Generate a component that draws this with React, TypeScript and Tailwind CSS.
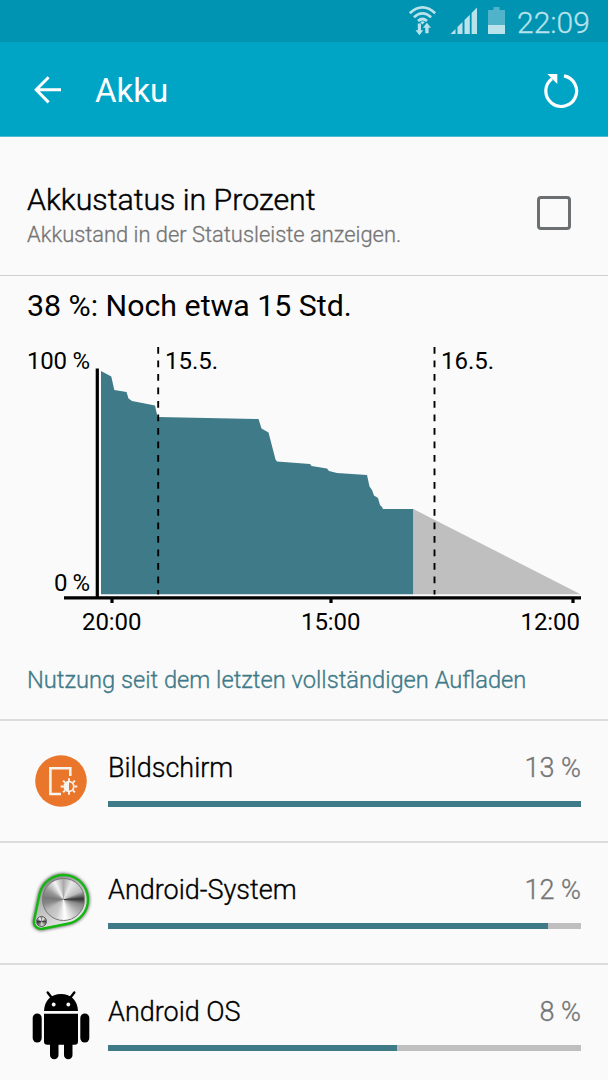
import type { ReactNode } from "react";

interface UsageItem {
  name: string;
  percent: number;
  fill: number;
  icon: ReactNode;
}

const WifiIcon = () => (
  <svg width="30" height="32" viewBox="0 0 30 32" fill="none" stroke="#b9e2eb" strokeWidth="2.7">
    <path d="M1.8 8.2 Q14.5 -3.4 27.2 8.2" />
    <path d="M5.9 12.2 Q14.5 4.4 23.1 12.2" />
    <path d="M10 16 Q14.5 12 19 16" />
    <path d="M12.3 17.3 L14.5 19.5 L16.7 17.3 Q14.5 15.4 12.3 17.3 Z" fill="#b9e2eb" stroke="none" />
    <path d="M9.8 18.5 H13 V25.2 H15.3 L11.4 30.3 L7.5 25.2 H9.8 Z" fill="#b9e2eb" stroke="none" />
    <path d="M17.3 28.2 H20.6 V22.8 H23 L18.9 17.7 L14.9 22.8 H17.3 Z" fill="#b9e2eb" stroke="none" />
  </svg>
);

const SignalIcon = () => (
  <svg width="28" height="28" viewBox="0 0 28 28" fill="#b9e2eb">
    <path d="M0.5 27 L5.5 22 V27 Z" />
    <path d="M7.5 20 L12.5 15 V27 H7.5 Z" />
    <path d="M14.5 13 L19.8 7.7 V27 H14.5 Z" />
    <path d="M21.6 5.9 L27 0.5 V27 H21.6 Z" />
  </svg>
);

const BatteryIcon = () => (
  <svg width="17" height="27" viewBox="0 0 17 27">
    <path d="M0 3 H5.5 V0 H11.5 V3 H17 V18 H0 Z" fill="#51b3c9" />
    <path d="M0 18 H17 V27 H0 Z" fill="#b9e2eb" />
  </svg>
);

const BackIcon = () => (
  <svg className="mb-[3px]" width="28" height="28" viewBox="0 0 28 28" fill="none" stroke="#fff" strokeWidth="3">
    <path d="M14.6 1.2 L2.2 13.8 L14.6 26.4 M2.4 13.8 H27" />
  </svg>
);

const RefreshIcon = () => (
  <svg width="36" height="36" viewBox="0 0 36 36">
    <path d="M21 2.9 A15.4 15.4 0 1 1 9 5.7" fill="none" stroke="#fff" strokeWidth="3.2" />
    <path d="M4.3 1 H14.3 V11 Z" fill="#fff" />
  </svg>
);

const ScreenIcon = () => (
  <svg width="68" height="72" viewBox="0 -1 68 72">
    <circle cx="34" cy="34" r="25.8" fill="#e9762b" />
    <path d="M43.3 29 V21.3 H23.4 V47 H34" fill="none" stroke="#f7f3ee" strokeWidth="2.6" />
    <g stroke="#f7f3ee" strokeWidth="1.9">
      <path d="M42 31.2 V34 M42 45 V47.8 M33.7 39.5 H36.5 M47.5 39.5 H50.3 M36.1 33.6 L38 35.5 M46 43.5 L47.9 45.4 M47.9 33.6 L46 35.5 M38 43.5 L36.1 45.4" />
      <circle cx="42" cy="39.5" r="4.8" fill="none" strokeWidth="1.7" />
    </g>
    <path d="M42 34.5 A5 5 0 0 0 42 44.5 Z" fill="#f7f3ee" />
  </svg>
);

const SystemIcon = () => (
  <svg width="68" height="72" viewBox="0 0 68 72">
    <defs>
      <linearGradient id="plate" x1="0" y1="0" x2="0.6" y2="1">
        <stop offset="0" stopColor="#6e6e6e" />
        <stop offset="0.5" stopColor="#bbb" />
        <stop offset="1" stopColor="#eee" />
      </linearGradient>
      <filter id="plateShadow" x="-20%" y="-20%" width="140%" height="140%">
        <feGaussianBlur stdDeviation="1.8" />
      </filter>
    </defs>
    <path d="M12.6 26 A24.5 24.5 0 1 1 40.5 55.7 L15.5 60.7 A7 7 0 0 1 7.1 52.5 Z" fill="#777" stroke="#777" strokeWidth="4" filter="url(#plateShadow)" />
    <path d="M12.6 26 A24.5 24.5 0 1 1 40.5 55.7 L15.5 60.7 A7 7 0 0 1 7.1 52.5 Z" fill="url(#plate)" stroke="#12b80f" strokeWidth="2.4" />
    <foreignObject x="15" y="10" width="46" height="46">
      <div className="h-[43px] w-[43px] rounded-full border border-[#777] bg-[conic-gradient(#aaa,#e8e8e8_25deg,#bbb_65deg,#333_88deg,#888_105deg,#c4c4c4_140deg,#fff_175deg,#ccc_205deg,#bbb_235deg,#888_258deg,#777_275deg,#999_300deg,#f4f4f4_333deg,#aaa)]" />
    </foreignObject>
    <foreignObject x="8.5" y="48" width="14" height="14">
      <div className="h-[11px] w-[11px] rounded-full border border-[#555] bg-[conic-gradient(#888,#eee_30deg,#444_90deg,#ddd_170deg,#777_220deg,#333_270deg,#fff_330deg,#888)]" />
    </foreignObject>
  </svg>
);

const AndroidIcon = () => (
  <svg width="68" height="72" viewBox="0 2.5 68 72">
    <path d="M17 23.6 C17.5 13 24 6.6 34 6.6 C44 6.6 50.5 13 51 23.6 Z" />
    <path d="M20.7 5 L24.5 10 M47.3 5 L43.5 10" stroke="#000" strokeWidth="2.4" strokeLinecap="round" />
    <circle cx="26.7" cy="17" r="1.9" fill="#fafafa" />
    <circle cx="41.3" cy="17" r="1.9" fill="#fafafa" />
    <path d="M17 26.3 H51 V54 Q51 57.3 47.7 57.3 H20.3 Q17 57.3 17 54 Z" />
    <rect x="5.7" y="26" width="9" height="29" rx="4.5" />
    <rect x="53.3" y="26" width="9" height="29" rx="4.5" />
    <path d="M23 55 H31.5 V67.5 A4.2 4.2 0 0 1 23 67.5 Z M37 55 H45.5 V67.5 A4.2 4.2 0 0 1 37 67.5 Z" />
  </svg>
);

const items: UsageItem[] = [
  { name: "Bildschirm", percent: 13, fill: 100, icon: <ScreenIcon /> },
  { name: "Android-System", percent: 12, fill: 93.1, icon: <SystemIcon /> },
  { name: "Android OS", percent: 8, fill: 61.1, icon: <AndroidIcon /> },
];

const BatteryChart = () => (
  <svg className="block" width="608" height="300" viewBox="0 340 608 300" fontFamily="Roboto, sans-serif" fontSize="24">
    <path d="M101 594.3 V371 L111.3 376.5 L114.3 390 L126.5 392 L128.5 398.5 L132 401 L155 405.5 L157.5 417 L258.5 419 L261.5 428.5 L268.5 432.5 L275.5 459.5 L277 461.5 L310 464 L311.5 466 L327 468.5 L329 471 L337 473 L367 475 L369.5 486.5 L372 490 L374 495.5 L378 498 L380 505 L382 507 L383 509 H413.5 V594.3 Z" fill="#3f7a89" />
    <path d="M413.3 509 L580.5 594.3 H413.3 Z" fill="#bfbfbf" />
    <path d="M158.2 347 V594.5 M434.5 347 V594.5" fill="none" stroke="#000" strokeWidth="1.9" strokeDasharray="6.75 6.75" />
    <path d="M97.3 368.5 V597.8 M64 597.9 H581" fill="none" stroke="#000" strokeWidth="3.2" />
    <path d="M112 599 V603 M331 599 V603 M573 599 V603" stroke="#000" strokeWidth="3.2" />
    <text x="27" y="368.5" textLength="63">100 %</text>
    <text x="54" y="591" textLength="36">0 %</text>
    <text x="165" y="368.5" textLength="53">15.5.</text>
    <text x="441" y="368.5" textLength="53">16.5.</text>
    <text x="82" y="629.5" textLength="59.5">20:00</text>
    <text x="301" y="629.5" textLength="59.5">15:00</text>
    <text x="520.5" y="629.5" textLength="59.5">12:00</text>
  </svg>
);

const UsageRow = ({ item }: { item: UsageItem }) => (
  <div className="flex h-[122px] shrink-0 border-t-2 border-[#dcdcdc] px-[27px]">
    <div className="mt-[25px] w-[81px] shrink-0">{item.icon}</div>
    <div className="min-w-0 flex-1 pt-[29px]">
      <div className="flex justify-between text-[27px] font-light leading-[36px] [-webkit-text-stroke:0.35px]">
        <span>{item.name}</span>
        <span className="text-[#757575]">{item.percent} %</span>
      </div>
      <div className="mt-[15px] h-[6px] bg-[#bfbfbf]">
        <div className="h-full bg-[#3f7a89]" style={{ width: `${item.fill}%` }} />
      </div>
    </div>
  </div>
);

export default function App() {
  return (
    <div className="flex h-[1080px] w-[608px] flex-col overflow-hidden bg-[#fafafa] font-['Roboto',sans-serif] text-black">
      <div className="flex h-[42px] shrink-0 bg-[#0093b2] pl-[407.5px] text-[#b9e2eb]">
        <div className="mt-[5px] w-[42px]"><WifiIcon /></div>
        <div className="mt-[7px] w-[38.5px]"><SignalIcon /></div>
        <div className="mt-[7px] w-[29px]"><BatteryIcon /></div>
        <span className="whitespace-nowrap text-[30px] font-light leading-[45px] [-webkit-text-stroke:0.3px]">22:09</span>
      </div>
      <header className="flex h-[95px] shrink-0 items-center border-b border-[#51b9d0] bg-[#00a5c6] pl-[34px] pr-[29px] pt-[4px] text-white">
        <BackIcon />
        <h1 className="ml-[33px] flex-1 text-[33px] leading-[40px]">Akku</h1>
        <RefreshIcon />
      </header>
      <div className="flex h-[138px] shrink-0 justify-between pl-[27px] pr-[37px] pt-[43px]">
        <div className="whitespace-nowrap">
          <div className="text-[30.3px] font-light leading-[40px] [-webkit-text-stroke:0.45px]">Akkustatus in Prozent</div>
          <div className="text-[21.9px] font-light leading-[29px] text-[#757575] [-webkit-text-stroke:0.3px]">Akkustand in der Statusleiste anzeigen.</div>
        </div>
        <div className="mt-[16px] h-[34px] w-[34px] rounded-[4px] border-3 border-[#6b6f71]" />
      </div>
      <section className="h-[444px] shrink-0 border-t border-[#cfcfcf]">
        <h2 className="mt-[10px] h-[54px] pl-[27px] text-[30.3px] leading-[40px]">38 %: Noch etwa 15 Std.</h2>
        <BatteryChart />
        <div className="mt-[25px] pl-[27px] text-[23.7px] font-light leading-[30px] text-[#3f7a89] [-webkit-text-stroke:0.35px]">Nutzung seit dem letzten vollständigen Aufladen</div>
      </section>
      {items.map((item) => (
        <UsageRow key={item.name} item={item} />
      ))}
    </div>
  );
}
